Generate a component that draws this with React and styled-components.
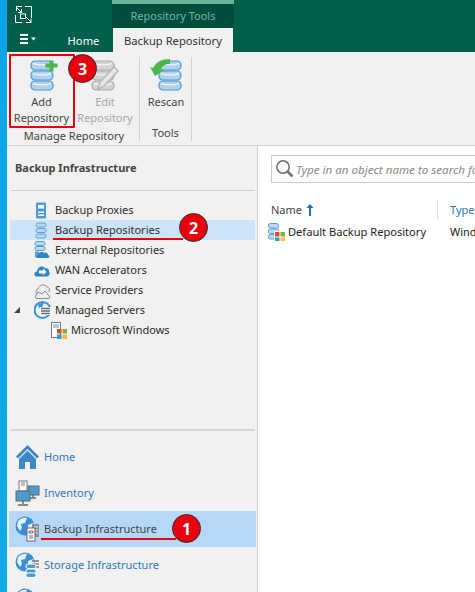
import React from "react";
import styled, { createGlobalStyle } from "styled-components";

const Global = createGlobalStyle`
  html, body { margin: 0; padding: 0; width: 475px; height: 592px; overflow: hidden; background: #f1f1f1; }
  #root { width: 475px; height: 592px; }
  * { box-sizing: border-box; }
`;

const font = `"Noto Sans", "Open Sans", "Liberation Sans", sans-serif`;

const Page = styled.div`
  display: flex; width: 475px; height: 592px; overflow: hidden;
  font-family: ${font}; font-size: 11px; color: #2c2c2c;
  background: linear-gradient(180deg, #0aa4e6, #14a9e8);
`;
const Win = styled.div`
  position: relative; flex: 1; min-width: 0; margin-left: 7px; display: flex; flex-direction: column; background: #f1f1f1;
`;
const TitleBar = styled.div`
  height: 28px; background: #005f4b; display: flex; align-items: stretch; padding-left: 8px; flex: none;
`;
const LogoBox = styled.div`
  width: 97px; flex: none; padding-top: 6px;
`;
const ContextTab = styled.div`
  width: 122px; background: #004d3d; border-top: 4px solid #6bb39c; color: #6cb7a3;
  font-size: 11px; display: flex; justify-content: center; align-items: center; padding-bottom: 2px;
`;
const TabRow = styled.div`
  height: 24px; background: #005f4b; display: flex; align-items: stretch; flex: none;
`;
const MenuBtn = styled.div`
  width: 47px; padding: 6px 0 0 13px; flex: none;
`;
const Tab = styled.div`
  width: ${p => p.$w}px; display: flex; justify-content: center; align-items: center; font-size: 11.2px; flex: none;
  color: ${p => p.$active ? "#333" : "#fff"};
  background: ${p => p.$active ? "#f1f1f1" : "transparent"};
`;
const Ribbon = styled.div`
  height: 94px; display: flex; background: #f1f1f1; border-bottom: 1px solid #d2d2d2; padding: 5px 0 0 2px; flex: none;
`;
const Group = styled.div`
  width: ${p => p.$w}px; display: flex; flex-direction: column; align-items: stretch; height: 84px; border-right: 1px solid #d0d0d0; flex: none;
`;
const GroupButtons = styled.div`
  display: flex; height: 70px; padding-top: 1px;
`;
const GroupLabel = styled.div`
  text-align: center; color: #444; font-size: 11px; line-height: 16px; margin-top: 2px;
`;
const RibbonButton = styled.div`
  width: ${p => p.$w}px; flex: none; display: flex; flex-direction: column; align-items: center; text-align: center;
  font-size: 11px; line-height: 16px; color: ${p => p.$off ? "#a8a8a8" : "#444"};
  svg { display: block; margin-bottom: 2px; }
`;
const Body = styled.div`
  flex: 1; min-height: 0; display: flex;
`;
const Nav = styled.div`
  width: 251px; flex: none; display: flex; flex-direction: column; border-right: 1px solid #d2d2d2; background: #f1f1f1;
`;
const NavTitle = styled.div`
  height: 45px; flex: none; margin: 0 2px 0 4px; padding: 14px 0 0 4px; font-weight: 700; font-size: 11px; line-height: 16px; color: #444; border-bottom: 1px solid #d0d0d0;
`;
const Tree = styled.div`
  height: 240px; padding-top: 9px; flex: none; border-bottom: 2px solid #d2d2d2; margin-left: 4px; margin-right: 2px;
`;
const TreeRow = styled.div`
  height: 20px; display: flex; align-items: center; padding-left: ${p => p.$indent}px; width: 245px; position: relative;
  background: ${p => p.$sel ? "#cde4f8" : "transparent"}; white-space: nowrap;
  margin-left: -1px;
  svg { flex: none; }
`;
const TreeLabel = styled.span`
  margin-left: ${p => p.$gap ?? 6}px; padding-bottom: 2px;
`;
const Expander = styled.div`
  position: absolute; left: 4px; top: 7px; width: 0; height: 0; border-left: 6px solid transparent; border-bottom: 6px solid #444;
`;
const Links = styled.div`
  padding-top: 8px; display: flex; flex-direction: column; flex: none;
`;
const NavLink = styled.div`
  height: 36px; display: flex; align-items: center; padding-left: 6px; margin-left: 2px; margin-right: 1px; color: ${p => p.$sel ? "#444" : "#2b78bd"};
  background: ${p => p.$sel ? "#b5d7f8" : "transparent"}; white-space: nowrap; flex: none;
  svg { flex: none; }
`;
const NavLinkLabel = styled.span`
  margin-left: 4px; padding-bottom: 2px;
`;
const Content = styled.div`
  flex: 1; min-width: 0; background: #fff; padding: 9px 0 0 13px; overflow: hidden;
`;
const Search = styled.div`
  height: 28px; width: 230px; border: 1px solid #ccc; display: flex; align-items: center; padding-left: 3px; color: #8a8a8a; font-style: italic; font-size: 11.6px; white-space: nowrap; overflow: hidden;
  svg { flex: none; }
`;
const SearchText = styled.span`
  margin-left: 1px;
`;
const ListHead = styled.div`
  display: flex; height: 20px; margin-top: 17px; align-items: center; color: #444; white-space: nowrap;
`;
const NameCol = styled.div`
  width: 167px; height: 20px; flex: none; display: flex; align-items: center; border-right: 1px solid #ddd; gap: 4px; margin-right: 12px;
  padding-bottom: 1px;
`;
const TypeCol = styled.div`
  color: #2b78bd; padding-bottom: 1px;
`;
const ListRow = styled.div`
  display: flex; align-items: center; height: 20px; margin-top: 2px; margin-left: -3px; color: #222; white-space: nowrap;
  svg { flex: none; }
`;
const RowName = styled.span`
  margin-left: 3px; width: 162px; flex: none; font-size: 11.1px; padding-bottom: 2px;
`;
const RowType = styled.span`
  padding-bottom: 2px;
`;
const Badge = styled.div`
  position: absolute; left: ${p => p.$x}px; top: ${p => p.$y}px; width: 29px; height: 29px; border-radius: 50%;
  background: #e8000f; border: 1px solid #333; color: #fff; font-family: "Open Sans", sans-serif; font-weight: 700; font-size: 16px;
  display: flex; align-items: center; justify-content: center; z-index: 3;
`;
const RedLine = styled.div`
  position: absolute; left: ${p => p.$x}px; top: ${p => p.$y}px; width: ${p => p.$w}px; height: 2px; background: #e8000f; z-index: 2;
`;
const RedBox = styled.div`
  position: absolute; left: 2px; top: 54px; width: 66px; height: 74px; border: 2px solid #e8000f; border-radius: 1px; z-index: 2;
`;

const Disk = ({ y, c }) => (
  <g>
    <rect x="1" y={y} width="22" height="9" rx="4" fill={c.fill} stroke={c.line} strokeWidth="1.2" />
    <path d={`M3 ${y + 2.6} Q12 ${y + 5} 21 ${y + 2.6}`} fill="none" stroke={c.hi} strokeWidth="1.2" />
  </g>
);
const blue = { fill: "#b3d1ea", line: "#4b97d0", hi: "#eef6fc" };
const gray = { fill: "#d3d3d3", line: "#ababab", hi: "#f5f5f5" };

const AddIcon = () => (
  <svg width="36" height="34" viewBox="0 0 36 34">
    <g transform="translate(6 3)">
      <Disk y={0} c={blue} /><Disk y={10} c={blue} /><Disk y={20} c={blue} />
    </g>
    <path d="M23.500 2.500h4v-3h4v3h4v4h-4v4h-4v-4h-4z" transform="translate(-2 3)" fill="#4cb648" />
  </svg>
);
const EditIcon = () => (
  <svg width="36" height="34" viewBox="0 0 36 34">
    <g transform="translate(4 3)">
      <Disk y={0} c={gray} /><Disk y={10} c={gray} /><Disk y={20} c={gray} />
    </g>
    <path d="M27 9l4 4-14 15-6 3 2-7z" fill="#e6e6e6" stroke="#b4b4b4" strokeWidth="1.3" />
  </svg>
);
const RescanIcon = () => (
  <svg width="36" height="34" viewBox="0 0 36 34">
    <g transform="translate(10 3)">
      <Disk y={0} c={blue} /><Disk y={10} c={blue} /><Disk y={20} c={blue} />
    </g>
    <path d="M22 1v5c-5 0-8 2-9 5l3 1-9 6-5-9 3 1C8 4 14 1 22 1z" fill="#4cb648" />
  </svg>
);
const Logo = () => (
  <svg width="18" height="17" viewBox="0 0 18 17" fill="none" stroke="#fff" strokeWidth="1">
    <path d="M1.500 5V.5H7M10 .5h6.500V12M16.500 16.500H11M7 16.500H.5V9" />
    <rect x="5.500" y="8" width="5" height="4.500" />
    <path d="M1.500 1.500l5 5M6.500 3v3.500H3M10 10l6 6M16 12.500v4h-4" />
  </svg>
);
const Hamburger = () => (
  <svg width="18" height="12" viewBox="0 0 18 12">
    <path d="M0 0h8v2H0zM0 4h8v2H0zM0 8h8v2H0z" fill="#fff" />
    <path d="M11 3.500h5l-2.500 3z" fill="#fff" />
  </svg>
);
const ProxyIcon = () => (
  <svg width="15" height="17" viewBox="0 0 15 17">
    <rect x="2" y="0.500" width="10" height="16" rx="1" fill="#4c9ad6" />
    <rect x="4" y="3" width="6" height="3.500" fill="#fff" />
    <rect x="4" y="9.500" width="6" height="1.500" fill="#fff" />
    <rect x="4" y="12.500" width="6" height="1.500" fill="#fff" />
  </svg>
);
const RepoSmall = () => (
  <svg width="15" height="17" viewBox="0 0 15 17">
    {[1, 6.500, 12].map(y => <rect key={y} x="2" y={y} width="10" height="4" rx="1.800" fill="#bcd7ee" stroke="#5aa0d6" />)}
  </svg>
);
const ExternalIcon = () => (
  <svg width="17" height="18" viewBox="0 0 17 18">
    {[0.5, 5.500].map(y => <rect key={y} x="1" y={y} width="10" height="4" rx="1.800" fill="#bcd7ee" stroke="#5aa0d6" />)}
    <rect x="1" y="10.500" width="4" height="6" fill="#5aa0d6" />
    <path d="M4 17c-2 0-2-3 0-3 0-3 5-4 6-2 2-1 4 0 4 2 2 0 2 3 0 3z" fill="#2f85c6" />
  </svg>
);
const WanIcon = () => (
  <svg width="16" height="13" viewBox="0 0 16 13">
    <path d="M3 12.500c-3.500 0-3.500-5 0-5C3.500 3 8 1 11 4c3 0 4 1.500 4 3.500 1.500 2 0 5-2 5z" fill="#2f85c6" />
    <path d="M5 6.500h4V4.500l3.500 3.500L9 11V9.500H5z" fill="#fff" />
  </svg>
);
const ProviderIcon = () => (
  <svg width="17" height="17" viewBox="0 0 17 17" fill="#e8edf1" stroke="#8b8b8b">
    <path d="M3 12C1 10 2 7 4 7c0-4 7-6 9-2 2 0 3 2 2 5" />
    <path d="M1 15l3-5 4 2 3-3 5 6-1 1.500H2z" />
  </svg>
);
const GlobeBase = () => (
  <g>
    <circle cx="10" cy="10" r="9.500" fill="#3d8fd0" />
    <path d="M3 5c3-3 6-4 9-3l-2 5-4 1 1 4-2 3-3-5z" fill="#e4f2fb" />
    <path d="M13 9l5-2 1 4-3 5-3-3z" fill="#e4f2fb" />
  </g>
);
const ServersIcon = () => (
  <svg width="17" height="18" viewBox="0 0 17 18">
    <circle cx="8.500" cy="9" r="8" fill="#e4f2fb" stroke="#3d8fd0" strokeWidth="2" />
    <path d="M4 4c2-2 4-2 6-2L8 6 5 7z" fill="#3d8fd0" />
    <rect x="6" y="6" width="11" height="8" fill="#fff" />
    <path d="M7 7.500h9M7 10h9M7 12.500h9" stroke="#5d6b75" strokeWidth="1.300" />
  </svg>
);
const WinFlag = ({ x = 0, y = 0, s = 7 }) => (
  <g transform={`translate(${x} ${y})`}>
    <rect width={s} height={s} fill="#e64a19" />
    <rect x={s + 1} width={s} height={s} fill="#7cb342" />
    <rect y={s + 1} width={s} height={s} fill="#29a1e0" />
    <rect x={s + 1} y={s + 1} width={s} height={s} fill="#fbc02d" />
  </g>
);
const MsWinIcon = () => (
  <svg width="17" height="17" viewBox="0 0 17 17">
    <rect x="0.500" y="0.500" width="9" height="15" fill="#fff" stroke="#777" />
    <path d="M2 3h6M2 5h6" stroke="#4c9ad6" />
    <WinFlag x={6} y={7} s={4.500} />
  </svg>
);
const RepoWinIcon = () => (
  <svg width="17" height="18" viewBox="0 0 17 18">
    {[0.5, 6, 11.500].map(y => <rect key={y} x="0.500" y={y} width="10" height="4.500" rx="1.800" fill="#bcd7ee" stroke="#5aa0d6" />)}
    <rect x="6" y="8" width="11" height="10" fill="#fff" />
    <WinFlag x={7} y={9} s={4.500} />
  </svg>
);
const HomeIcon = () => (
  <svg width="25" height="26" viewBox="0 0 25 26">
    <path d="M12.500 1L1 12.500l2 2L12.500 5 22 14.500l2-2z" fill="#3b8ac4" />
    <path d="M4 15l8.500-8.500L21 15v10h-6v-7h-5v7H4z" fill="#3b8ac4" />
  </svg>
);
const InventoryIcon = () => (
  <svg width="25" height="26" viewBox="0 0 25 26">
    <rect x="4" y="1" width="8" height="10" fill="#fff" stroke="#777" />
    <path d="M6 3h4M6 5h4" stroke="#777" />
    <rect x="13" y="6" width="11" height="9" fill="#4d9ad3" stroke="#666" />
    <path d="M18 15v2M15 18h6" stroke="#666" strokeWidth="1.500" />
    <rect x="1" y="11" width="14" height="10" fill="#4d9ad3" stroke="#666" />
    <path d="M8 21v3M3 25h10" stroke="#666" strokeWidth="1.500" />
  </svg>
);
const BackupInfraIcon = () => (
  <svg width="25" height="26" viewBox="0 0 25 26">
    <GlobeBase />
    <rect x="17" y="8" width="7" height="13" fill="#8d8d8d" />
    <path d="M19 11h4M19 14h4M19 17h4" stroke="#e8e8e8" />
    <rect x="12" y="12" width="8" height="13" fill="#fff" stroke="#666" />
    <path d="M14 15h4v2h-4zM14 20h4M14 22h4" fill="none" stroke="#666" />
  </svg>
);
const StorageInfraIcon = () => (
  <svg width="25" height="26" viewBox="0 0 25 26">
    <GlobeBase />
    <path d="M17 9h7M17 12h7M17 15h7" stroke="#777" strokeWidth="1.500" />
    {[12, 17, 21].map(y => <rect key={y} x="11" y={y} width="10" height="4.500" rx="2" fill="#4d9ad3" stroke="#fff" />)}
  </svg>
);
const LastIcon = () => (
  <svg width="25" height="26" viewBox="0 0 25 26">
    <GlobeBase />
  </svg>
);
const SearchIcon = () => (
  <svg width="20" height="20" viewBox="0 0 20 20" fill="none" stroke="#6f6f6f">
    <circle cx="8" cy="8" r="6.200" strokeWidth="1.500" />
    <path d="M12.500 12.500l5 5" strokeWidth="2.500" />
  </svg>
);
const SortArrow = () => (
  <svg width="8" height="12" viewBox="0 0 8 12">
    <path d="M4 0l3.500 4H5v8H3V4H.5z" fill="#1a73b8" />
  </svg>
);

export default function App() {
  return (
    <Page>
      <Global />
      <Win>
        <TitleBar>
          <LogoBox><Logo /></LogoBox>
          <ContextTab>Repository Tools</ContextTab>
        </TitleBar>
        <TabRow>
          <MenuBtn><Hamburger /></MenuBtn>
          <Tab $w={59}>Home</Tab>
          <Tab $w={120} $active>Backup Repository</Tab>
        </TabRow>
        <Ribbon>
          <Group $w={131}>
            <GroupButtons>
              <RibbonButton $w={65}><AddIcon />Add<br />Repository</RibbonButton>
              <RibbonButton $w={62} $off><EditIcon />Edit<br />Repository</RibbonButton>
            </GroupButtons>
            <GroupLabel>Manage Repository</GroupLabel>
          </Group>
          <Group $w={52}>
            <GroupButtons>
              <RibbonButton $w={52}><RescanIcon />Rescan</RibbonButton>
            </GroupButtons>
            <GroupLabel>Tools</GroupLabel>
          </Group>
        </Ribbon>
        <Body>
          <Nav>
            <NavTitle>Backup Infrastructure</NavTitle>
            <Tree>
              <TreeRow $indent={24}><ProxyIcon /><TreeLabel>Backup Proxies</TreeLabel></TreeRow>
              <TreeRow $indent={24} $sel><RepoSmall /><TreeLabel>Backup Repositories</TreeLabel></TreeRow>
              <TreeRow $indent={24}><ExternalIcon /><TreeLabel $gap={4}>External Repositories</TreeLabel></TreeRow>
              <TreeRow $indent={24}><WanIcon /><TreeLabel $gap={5}>WAN Accelerators</TreeLabel></TreeRow>
              <TreeRow $indent={24}><ProviderIcon /><TreeLabel $gap={4}>Service Providers</TreeLabel></TreeRow>
              <TreeRow $indent={24}><Expander /><ServersIcon /><TreeLabel $gap={4}>Managed Servers</TreeLabel></TreeRow>
              <TreeRow $indent={41}><MsWinIcon /><TreeLabel $gap={3}>Microsoft Windows</TreeLabel></TreeRow>
            </Tree>
            <Links>
              <NavLink><HomeIcon /><NavLinkLabel>Home</NavLinkLabel></NavLink>
              <NavLink><InventoryIcon /><NavLinkLabel>Inventory</NavLinkLabel></NavLink>
              <NavLink $sel><BackupInfraIcon /><NavLinkLabel>Backup Infrastructure</NavLinkLabel></NavLink>
              <NavLink><StorageInfraIcon /><NavLinkLabel>Storage Infrastructure</NavLinkLabel></NavLink>
              <NavLink><LastIcon /></NavLink>
            </Links>
          </Nav>
          <Content>
            <Search><SearchIcon /><SearchText>Type in an object name to search for</SearchText></Search>
            <ListHead>
              <NameCol>Name <SortArrow /></NameCol>
              <TypeCol>Type</TypeCol>
            </ListHead>
            <ListRow>
              <RepoWinIcon />
              <RowName>Default Backup Repository</RowName>
              <RowType>Windows</RowType>
            </ListRow>
          </Content>
        </Body>
        <RedBox />
        <Badge $x={61} $y={54}>3</Badge>
        <RedLine $x={46} $y={238} $w={130} />
        <Badge $x={172} $y={213}>2</Badge>
        <RedLine $x={34} $y={538} $w={135} />
        <Badge $x={165} $y={514}>1</Badge>
      </Win>
    </Page>
  );
}
